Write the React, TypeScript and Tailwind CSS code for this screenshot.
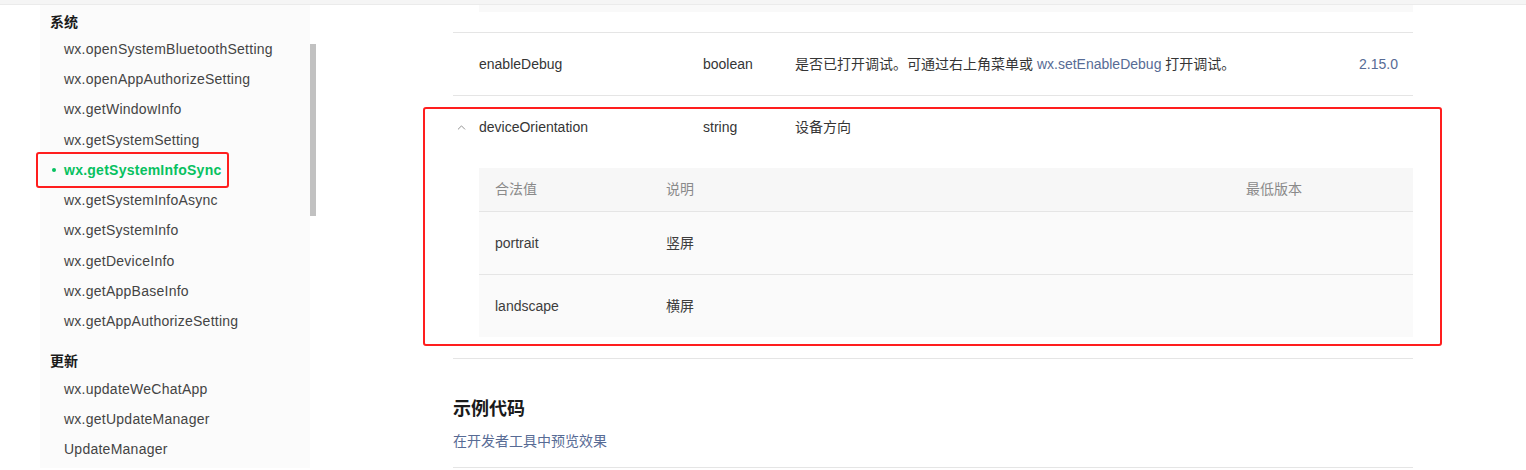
import { ChevronUp } from "lucide-react";

const systemItems = [
  "wx.openSystemBluetoothSetting",
  "wx.openAppAuthorizeSetting",
  "wx.getWindowInfo",
  "wx.getSystemSetting",
  "wx.getSystemInfoSync",
  "wx.getSystemInfoAsync",
  "wx.getSystemInfo",
  "wx.getDeviceInfo",
  "wx.getAppBaseInfo",
  "wx.getAppAuthorizeSetting",
];

const updateItems = ["wx.updateWeChatApp", "wx.getUpdateManager", "UpdateManager"];

const ACTIVE = "wx.getSystemInfoSync";

function NavItem({ label }: { label: string }) {
  const active = label === ACTIVE;
  return (
    <div className="relative flex h-[30.3px] items-center pl-[14px] tracking-[0.25px]">
      {active && (
        <>
          <span className="absolute left-[2px] top-1/2 h-[4px] w-[4px] -translate-y-1/2 rounded-full bg-[#07c160]" />
          <span className="pointer-events-none absolute -top-[3px] left-[-14px] h-[36px] w-[193px] rounded-[3px] border-2 border-[#ff1e1e]" />
        </>
      )}
      <span className={active ? "font-bold text-[#07c160]" : "text-[#444444]"}>{label}</span>
    </div>
  );
}

function Sidebar() {
  return (
    <div className="flex w-[316px] shrink-0">
      <div className="w-[40px] shrink-0 bg-white" />
      <div className="w-[270px] shrink-0 bg-[#fbfbfb] pl-[10px] pt-[7px] text-[14px]">
        <div className="flex h-[20px] items-center font-bold text-[#1a1a1a]">系统</div>
        <div className="mt-[2px]">
          {systemItems.map((item) => (
            <NavItem key={item} label={item} />
          ))}
        </div>
        <div className="mt-[15px] flex h-[20px] items-center font-bold text-[#1a1a1a]">更新</div>
        <div className="mt-[2px]">
          {updateItems.map((item) => (
            <NavItem key={item} label={item} />
          ))}
        </div>
      </div>
      <div className="w-[6px] shrink-0">
        <div className="mt-[39px] h-[172px] w-[6px] bg-[#c1c1c1]" />
      </div>
    </div>
  );
}

function SubTable() {
  const rows = [
    ["portrait", "竖屏"],
    ["landscape", "横屏"],
  ];
  return (
    <div className="ml-[26px] text-[14px]">
      <div className="flex h-[43px] items-center bg-[#f7f7f7] text-[#8a8a8a]">
        <div className="w-[187px] shrink-0 pl-[16px]">合法值</div>
        <div className="flex-1">说明</div>
        <div className="w-[167px] shrink-0">最低版本</div>
      </div>
      {rows.map(([value, desc]) => (
        <div key={value} className="flex h-[63px] items-center border-t border-[#e5e5e5] bg-[#fafafa] text-[#3d3d3d]">
          <div className="w-[187px] shrink-0 pl-[16px]">{value}</div>
          <div className="flex-1">{desc}</div>
          <div className="w-[167px] shrink-0" />
        </div>
      ))}
    </div>
  );
}

function Main() {
  return (
    <div className="flex-1 pl-[137px]">
      <div className="w-[960px] text-[14px] text-[#353535]">
        <div className="ml-[26px] h-[7px] bg-[#f9f9f9]" />
        <div className="mt-[20px] border-t border-[#e5e5e5]" />

        <div className="flex h-[62px] items-center">
          <div className="w-[250px] shrink-0 pl-[26px]">enableDebug</div>
          <div className="w-[92px] shrink-0">boolean</div>
          <div className="flex-1">
            是否已打开调试。可通过右上角菜单或 <span className="text-[#576b95]">wx.setEnableDebug</span> 打开调试。
          </div>
          <div className="w-[80px] shrink-0 pr-[15px] text-right text-[#576b95]">2.15.0</div>
        </div>

        <div className="relative border-t border-[#e5e5e5]">
          <div className="pointer-events-none absolute left-[-30px] right-[-29px] top-[11px] h-[239px] rounded-[3px] border-2 border-[#ff1e1e]" />
          <div className="flex h-[62px] items-center">
            <div className="flex w-[250px] shrink-0 items-center">
              <div className="flex w-[26px] shrink-0 justify-start pl-[2px]">
                <ChevronUp className="h-[13px] w-[13px] text-[#7a7a7a]" strokeWidth={1.5} />
              </div>
              <span>deviceOrientation</span>
            </div>
            <div className="w-[92px] shrink-0">string</div>
            <div className="flex-1">设备方向</div>
          </div>
          <div className="pt-[10px]">
            <SubTable />
          </div>
          <div className="h-[21px]" />
        </div>

        <div className="border-t border-[#e5e5e5]" />

        <div className="mt-[38px] flex h-[24px] items-center text-[18px] font-bold text-[#1a1a1a]">示例代码</div>
        <div className="mt-[10px] flex h-[20px] items-center text-[#576b95]">在开发者工具中预览效果</div>
        <div className="mt-[16px] border-t border-[#e5e5e5]" />
      </div>
    </div>
  );
}

export default function App() {
  return (
    <div
      className="h-[470px] w-[1526px] overflow-hidden bg-white"
      style={{ fontFamily: '"Liberation Sans", "Noto Sans CJK SC", sans-serif' }}
    >
      <div className="h-[5px] border-b border-[#ebebeb] bg-[#f5f5f5]" />
      <div className="flex">
        <Sidebar />
        <Main />
      </div>
    </div>
  );
}
